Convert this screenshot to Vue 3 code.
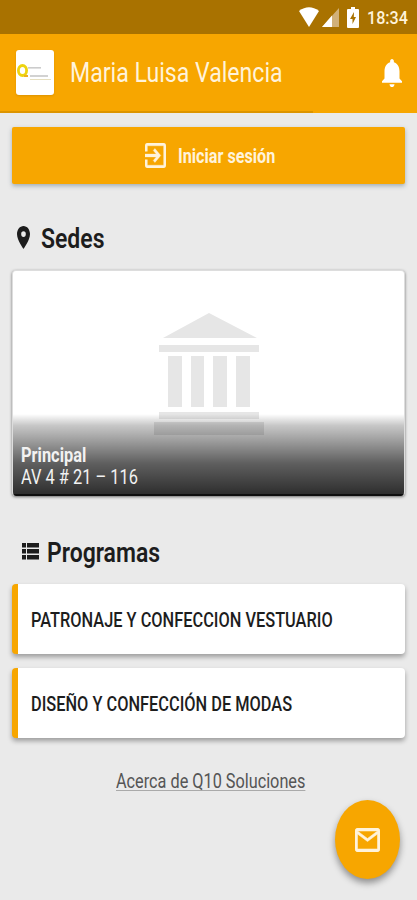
<script setup>
const programs = ['PATRONAJE Y CONFECCION VESTUARIO', 'DISEÑO Y CONFECCIÓN DE MODAS']
</script>

<template>
  <div class="screen">
    <div class="status">
      <svg class="wifi" viewBox="0 0 20 20" preserveAspectRatio="none"><path d="M0 4Q10-3.5 20 4L10 20Z" fill="#fff" /></svg>
      <svg class="signal" viewBox="0 0 17 20" preserveAspectRatio="none"><path d="M17 0V20H0Z" fill="#d1b078" /><path d="M10 8V20H0Z" fill="#fff" /></svg>
      <svg class="battery" viewBox="0 0 12 21" preserveAspectRatio="none"><path d="M4 0H8V2H11Q12 2 12 3V20Q12 21 11 21H1Q0 21 0 20V3Q0 2 1 2H4Z" fill="#fff" /><path d="M7 5L3 12H5.5V17L9 10H6.8Z" fill="#a97200" /></svg>
      <span class="txt time">18:34</span>
    </div>
    <header class="bar">
      <div class="logo">
        <svg viewBox="0 0 37 45" width="37" height="45">
          <ellipse cx="6.5" cy="20.5" rx="4.1" ry="5" fill="none" stroke="#eed410" stroke-width="2.8" />
          <path d="M8 26H12" stroke="#edaf20" stroke-width="2" />
          <path d="M12 17.8H25" stroke="#ccc" stroke-width="1.6" />
          <path d="M14 26H32" stroke="#d2d2d2" stroke-width="2" />
          <path d="M14 29.5H35" stroke="#dfd7ae" stroke-width=".8" />
        </svg>
      </div>
      <span class="txt title">Maria Luisa Valencia</span>
      <svg class="bell" viewBox="4 2.5 16 19.5" preserveAspectRatio="none"><path fill="#fff" d="M12 22c1.1 0 2-.9 2-2h-4c0 1.1.89 2 2 2zm6-6v-5c0-3.07-1.64-5.64-4.5-6.32V4c0-.83-.67-1.5-1.5-1.5s-1.5.67-1.5 1.5v.68C7.63 5.36 6 7.92 6 11v5l-2 2v1h16v-1l-2-2z" /></svg>
    </header>
    <div class="progress"><i></i></div>
    <main>
      <button class="login">
        <svg class="enter" viewBox="3 3 18 18" preserveAspectRatio="none"><path fill="#fff3db" stroke="#fff3db" stroke-width=".3" d="M10.09 15.59L11.5 17l5-5-5-5-1.41 1.41L12.67 11H3v2h9.67l-2.58 2.59zM19 3H5c-1.11 0-2 .9-2 2v4h2V5h14v14H5v-4H3v4c0 1.1.89 2 2 2h14c1.1 0 2-.9 2-2V5c0-1.1-.9-2-2-2z" /></svg>
        <span class="txt login-label">Iniciar sesión</span>
      </button>
      <h2 class="sedes">
        <svg class="pin" viewBox="5 2 14 20" preserveAspectRatio="none"><path fill="#1d1d1d" d="M12 2C8.13 2 5 5.13 5 9c0 5.25 7 13 7 13s7-7.75 7-13c0-3.87-3.13-7-7-7zm0 9.5a2.5 2.5 0 1 1 0-5 2.5 2.5 0 0 1 0 5z" /></svg>
        <span class="txt sedes-label">Sedes</span>
      </h2>
      <section class="campus">
        <svg class="bank" viewBox="0 0 110 122" width="110" height="122">
          <path fill="#e6e6e6" d="M55 0L103 25H9ZM5 32H105V39H5ZM14 43H28V94H14ZM37 43H50V94H37ZM59 43H73V94H59ZM82 43H96V94H82ZM5 99H105V106H5ZM0 109H110V122H0Z" />
        </svg>
        <div class="caption">
          <span class="txt name">Principal</span>
          <span class="txt address">AV 4 # 21 – 116</span>
        </div>
      </section>
      <h2 class="programs">
        <svg class="list" viewBox="0 0 17 17" width="17" height="17"><path fill="#1d1d1d" d="M0 0H4V4.6H0ZM5 0H17V4.6H5ZM0 6H4V10.6H0ZM5 6H17V10.6H5ZM0 12H4V16.6H0ZM5 12H17V16.6H5Z" /></svg>
        <span class="txt programs-label">Programas</span>
      </h2>
      <article v-for="p in programs" :key="p" class="program">
        <span class="txt program-label">{{ p }}</span>
      </article>
      <footer><a class="txt about">Acerca de Q10 Soluciones</a></footer>
    </main>
    <button class="fab">
      <svg class="mail" viewBox="2 4 20 16" preserveAspectRatio="none"><path fill="#fff3db" stroke="#fff3db" stroke-width=".4" d="M22 6c0-1.1-.9-2-2-2H4c-1.1 0-2 .9-2 2v12c0 1.1.9 2 2 2h16c1.1 0 2-.9 2-2V6zm-2 0l-8 5-8-5h16zm0 12H4V8l8 5 8-5v10z" /></svg>
    </button>
  </div>
</template>

<style>
body { margin: 0; background: #eaeaea; }
</style>

<style scoped>
.screen { position: relative; width: 417px; height: 900px; overflow: hidden; background: #eaeaea; font-family: Roboto, sans-serif; color: #1d1d1d; }
.screen * { box-sizing: border-box; }
.txt { display: block; white-space: nowrap; transform-origin: 0 50%; transform: scaleX(.82); flex: none; }
svg { display: block; flex: none; }
.status { height: 34px; background: #a97200; display: flex; align-items: flex-start; padding: 7px 0 0 299px; }
.wifi { width: 20px; height: 20px; }
.signal { width: 17px; height: 19px; margin: 1px 0 0 3px; }
.battery { width: 12px; height: 21px; margin-left: 8px; }
.time { margin: -1px -20px 0 8px; font-size: 19px; line-height: 24px; font-weight: 500; color: #fff3db; transform: scaleX(.85); }
.bar { height: 77px; background: #f7a600; display: flex; align-items: center; padding-left: 16px; }
.logo { width: 38px; height: 45px; background: #fff; border-radius: 3px; box-shadow: 0 1px 2px #b8780066; }
.title { width: 312px; margin-left: 16px; font-size: 28px; line-height: 40px; color: #fff3db; transform: scaleX(.825); }
.bell { width: 20px; height: 28px; }
.progress { height: 2px; background: #f7a600; }
.progress i { display: block; width: 313px; height: 2px; background: #dc9400; }
main { padding: 14px 12px 0; }
button { border: 0; padding: 0; background: #f7a600; font-family: inherit; }
.login { width: 393px; height: 57px; border-radius: 2px; display: flex; align-items: center; padding-left: 133px; box-shadow: 0 2px 4px #5b738080; }
.enter { width: 21px; height: 25px; margin-top: -1px; }
.login-label { margin: 2px 0 0 12px; font-size: 19.5px; line-height: 28px; font-weight: 700; color: #fff3db; transform: scaleX(.83); }
h2 { margin: 0; font-size: 28px; line-height: 36px; font-weight: 600; display: flex; align-items: center; }
.sedes { margin-top: 37px; height: 36px; padding-left: 5px; }
.pin { width: 13px; height: 23px; margin-top: -3px; }
.sedes-label { margin-left: 11px; }
.campus { width: 393px; height: 226px; margin-top: 13px; background: #fff; border-radius: 4px; border: 1px solid #ddd; border-width: 1px 1px 0; box-shadow: 0 1px 3px #0008; position: relative; overflow: hidden; }
.bank { margin: 42px auto 0; }
.caption { position: absolute; left: -1px; right: -1px; bottom: 0; height: 82px; padding: 31px 0 0 9px; background: linear-gradient(#0000 0%, #00000038 14%, #000000a0 60%, #000000d0 97%, #000000f0 98%); color: #f2f2f2; font-size: 20px; line-height: 21px; }
.name { font-weight: 700; }
.address { margin-top: 1px; }
.programs { margin-top: 39px; height: 36px; padding-left: 10px; }
.list { margin-top: -3px; }
.programs-label { margin-left: 8px; }
.program { width: 393px; height: 70px; margin-top: 14px; background: #fff; border-left: 6px solid #f7a600; border-radius: 4px; box-shadow: 0 3px 5px #0005; display: flex; align-items: center; padding: 3px 0 0 13px; }
.programs + .program { margin-top: 13px; }
.program-label { font-size: 19.5px; line-height: 26px; font-weight: 500; transform: scaleX(.839); }
footer { padding: 30px 0 0 104px; }
.about { width: 232px; font-size: 20px; line-height: 26px; color: #555; text-decoration: underline; text-decoration-color: #aaa; text-underline-offset: 2px; text-decoration-thickness: 1px; transform: scaleX(.813); }
.fab { position: absolute; left: 335px; top: 800px; width: 65px; height: 79px; border-radius: 50%; display: flex; align-items: center; justify-content: center; box-shadow: 0 4px 7px #0006; }
.mail { width: 25px; height: 24px; }
</style>
